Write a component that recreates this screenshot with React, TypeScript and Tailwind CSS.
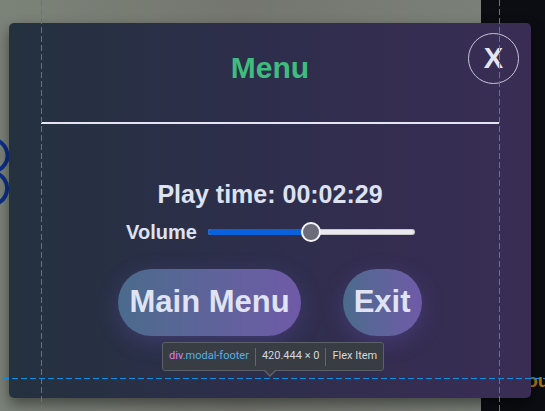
import React from 'react';

const sans = "font-['Liberation_Sans',Arial,sans-serif]";

function VolumeSlider({ value }: { value: number }) {
  return (
    <div className="relative flex h-[20px] w-[207px] items-center">
      <div className="flex h-[6px] w-full overflow-hidden rounded-full bg-[#e9e9ee] shadow-[inset_0_0_0_1px_rgba(0,0,0,0.15)]">
        <div className="h-full bg-[#0b61dc]" style={{ width: `${value}%` }} />
      </div>
      <div
        className="absolute top-0 h-[20px] w-[20px] -translate-x-1/2 rounded-full border-2 border-[#f4f4f8] bg-[#6b6b79]"
        style={{ left: `${value}%` }}
      />
    </div>
  );
}

function DevtoolsOverlay() {
  return (
    <>
      {/* guide lines drawn by the inspector */}
      <svg className="pointer-events-none absolute left-0 top-0" width="545" height="411" shapeRendering="crispEdges">
        <line x1="41.5" y1="0" x2="41.5" y2="411" stroke="#0e8ee0" strokeWidth="1" strokeDasharray="6 3" />
        <line x1="499.5" y1="0" x2="499.5" y2="411" stroke="#0e8ee0" strokeWidth="1" strokeDasharray="6 3" />
        <line x1="3" y1="378.5" x2="545" y2="378.5" stroke="#0e8ee0" strokeWidth="1" strokeDasharray="6 3" />
      </svg>

      {/* tooltip */}
      <div className="absolute left-[162px] top-[342px] flex h-[29px] items-center rounded-[3px] border border-[#5c6068] bg-[#383c43] px-[6px] font-['Roboto',sans-serif] text-[11px] text-[#d6d8dc]">
        <span>
          <span className="text-[#df7fe6]">div</span>
          <span className="text-[#55b1e6]">.modal-footer</span>
        </span>
        <span className="mx-[6px] h-[18px] w-px bg-[#62666d]" />
        <span>420.444 × 0</span>
        <span className="mx-[6px] h-[18px] w-px bg-[#62666d]" />
        <span>Flex Item</span>
        <div className="absolute left-[100px] top-[27px] h-0 w-0 border-x-[7px] border-t-[7px] border-x-transparent border-t-[#5c6068]" />
        <div className="absolute left-[101px] top-[26px] h-0 w-0 border-x-[6px] border-t-[6px] border-x-transparent border-t-[#383c43]" />
      </div>
    </>
  );
}

export default function App() {
  return (
    <div className={`relative h-[411px] w-[545px] overflow-hidden ${sans}`}>
      {/* page behind the modal */}
      <div className="flex h-full w-full">
        <div className="relative w-[481px] bg-gradient-to-r from-[#7b8379] via-[#74766f] to-[#7a8078]">
          <svg className="absolute left-0 top-[134px]" width="10" height="76" viewBox="0 0 10 76">
            <path d="M-14 4 A20 17 0 0 1 7 18 A20 17 0 0 1 -6 38" fill="none" stroke="#0b2f8c" strokeWidth="4" />
            <path d="M-6 38 A20 17 0 0 1 7 56 A20 17 0 0 1 -14 72" fill="none" stroke="#0b2f8c" strokeWidth="4" />
          </svg>
        </div>
        <div className="relative flex-1 bg-[#0b0d12]">
          <span className="absolute left-[34px] top-[370px] text-[19px] font-bold leading-[22px] text-[#a8760f]">You</span>
        </div>
      </div>

      {/* modal */}
      <div className="absolute left-[9px] top-[23px] flex h-[375px] w-[522px] flex-col rounded-[5px] bg-gradient-to-r from-[#24313f] via-[#2e2e4c] to-[#3a2d55] px-[32px] shadow-[0_6px_14px_rgba(0,0,0,0.45)]">
        <div className="border-b-2 border-[#e4e4f4] pb-[37px] pt-[28px] text-center">
          <h2 className="text-[30px] font-bold leading-[34px] text-[#3fbc7e]">Menu</h2>
        </div>
        <button className="absolute left-[459px] top-[10px] flex h-[51px] w-[51px] items-center justify-center rounded-full border-[1.5px] border-[#c6c4d8] text-[29px] font-bold leading-none text-[#e4e6f4]">
          X
        </button>

        <div className="mt-[56px] flex flex-col items-center text-[#dde2f1]">
          <p className="text-[25px] font-bold leading-[29px]">Play time: 00:02:29</p>
          <div className="mt-[11px] flex items-center gap-[11px] pl-[1px]">
            <span className="text-[20px] font-bold leading-[24px]">Volume</span>
            <VolumeSlider value={50} />
          </div>
        </div>

        <div className="mt-[25px] flex justify-center gap-[42px]">
          <button className="h-[67px] rounded-full bg-gradient-to-r from-[#4a6b8c] to-[#6f5aa8] px-[11px] text-[31px] font-bold text-[#dfe3f3] shadow-[0_6px_22px_rgba(110,90,200,0.3)]">
            Main Menu
          </button>
          <button className="h-[67px] rounded-full bg-gradient-to-r from-[#4a6b8c] to-[#6f5aa8] px-[11px] text-[31px] font-bold text-[#dfe3f3] shadow-[0_6px_22px_rgba(110,90,200,0.3)]">
            Exit
          </button>
        </div>

        <div className="modal-footer mt-[43px] flex h-0 justify-center" />
      </div>

      <DevtoolsOverlay />
    </div>
  );
}
